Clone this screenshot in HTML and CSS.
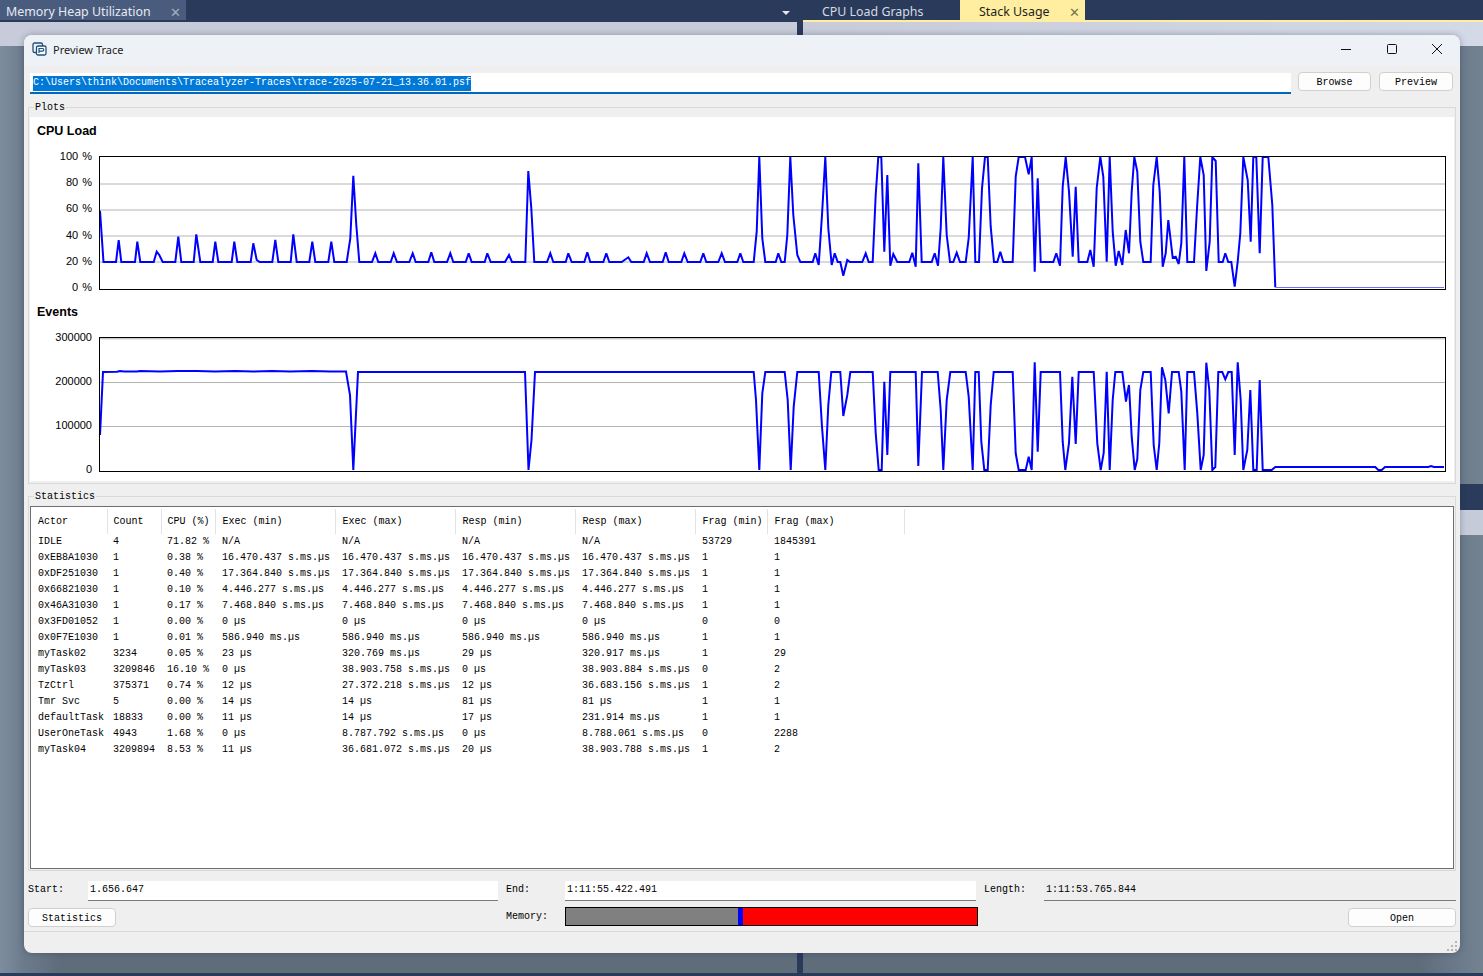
FILE: index.html
```html
<!doctype html>
<html lang="en">

<head>
    <meta charset="UTF-8">
    <title>Preview Trace</title>
    <link rel="stylesheet" href="styles.css">
</head>

<body>
    <div class="tabbar">
        <div class="tab tab--left">Memory Heap Utilization<span class="tab--x">✕</span></div>
        <div class="tabbar--arrow"></div>
        <div class="tab tab--plain">CPU Load Graphs</div>
        <div class="tab tab--active">Stack Usage<span class="tab--x">✕</span></div>
    </div>
    <div class="tabline"><div class="tabline--yellow"></div></div>

    <div class="side-band side-band--dark"></div>
    <div class="side-band side-band--light"></div>
    <div class="foot-split"></div>
    <div class="foot-divider"></div>
    <div class="top-split"></div>

    <div class="window">
        <div class="titlebar">
            <svg class="titlebar--icon" width="15" height="15" viewBox="0 0 15 15">
                <path d="M4.5 10.5H2.5a1.5 1.5 0 0 1-1.5-1.5V2.500a1.500 1.500 0 0 1 1.500-1.500H9a1.500 1.500 0 0 1 1.500 1.500V4" fill="none" stroke="#1c4f7c" stroke-width="1.300"/>
                <rect x="4.500" y="4" width="9.500" height="9" rx="1.500" fill="#fff" stroke="#1c4f7c" stroke-width="1.300"/>
                <path d="M7 11V6.500h3.500a1.300 1.300 0 0 1 0 2.600H7" fill="none" stroke="#1c4f7c" stroke-width="1.200"/>
            </svg>
            <span class="titlebar--text">Preview Trace</span>
            <div class="titlebar--buttons">
                <svg width="12" height="12" viewBox="0 0 12 12"><path d="M1 6.500H11" stroke="#111" stroke-width="1"/></svg>
                <svg width="12" height="12" viewBox="0 0 12 12"><rect x="1.500" y="1.500" width="9" height="9" rx="1" fill="none" stroke="#111"/></svg>
                <svg width="12" height="12" viewBox="0 0 12 12"><path d="M1 1L11 11M11 1L1 11" stroke="#111" stroke-width="1"/></svg>
            </div>
        </div>

        <div class="content">
            <div class="pathrow">
                <div class="field field--path"><span class="selected">C:\Users\think\Documents\Tracealyzer-Traces\trace-2025-07-21_13.36.01.psf</span></div>
                <button class="btn btn--browse">Browse</button>
                <button class="btn btn--preview">Preview</button>
            </div>

            <div class="group group--plots">
                <span class="group--label">Plots</span>
                <div class="plots">
                    <div class="plot--title">CPU Load</div>
                    <div class="plot plot--cpu">
                        <div class="axis">
                            <span>100 %</span><span>80 %</span><span>60 %</span><span>40 %</span><span>20 %</span><span>0 %</span>
                        </div>
                        <svg class="chart" width="1347" height="134" viewBox="99 156 1347 134">
                            <path class="grid" d="M100 184H1445M100 210H1445M100 236H1445M100 262H1445"/>
                            <polyline class="line" points="100,210.700 103.500,262 116,262 118.700,240 121.300,262 135,262 137.300,241.700 140.300,262 153.700,262 156.700,251.700 159.300,255 162.700,262 175.300,262 178.300,236.700 181.300,262 193.700,262 196.300,234.300 200.300,262 212.700,262 215.300,241.700 218.300,262 231.700,262 234.300,241.700 237.300,262 250.700,262 253.300,243.300 256.700,260 259.700,262 272.300,262 275.300,240 278.300,262 290.700,262 293.300,234.300 296.700,262 309.300,262 312.300,241.700 315.300,262 328.300,262 331.300,241.700 334.300,262 346.700,262 350.300,238.300 353.300,175.700 356.300,225 359.300,262 372,262 375.300,253.300 378.300,262 390.700,262 393.700,253.300 397,262 409.300,262 412.700,253.300 415.700,262 428.300,262 431.300,252.300 434.300,262 447,262 450.300,253.300 453.300,262 465.700,262 468.700,253.300 471.700,262 484.700,262 487.300,253.300 490.700,262 505,262 509,255 512,262 525.300,262 528.300,171 531.300,208.300 534.300,262 547,262 550.300,253.300 553.300,262 565.700,262 568.300,253.300 571.700,262 584.300,262 587.300,252.300 590.300,262 603.300,262 606.300,253.300 609.300,262 621.700,262 628.300,257.300 631.300,262 643.700,262 646.700,253.300 650,262 662.700,262 665.700,252.300 668.700,262 681.300,262 684.300,253.300 687.700,262 700.300,262 703.300,253.300 706.300,262 718.300,262 721.700,253.300 725,262 737.300,262 740.300,253.300 743.300,262 753.700,262 756.700,231.700 759.300,157 762.300,238.300 765.300,262 775.700,262 778.300,253.300 781.300,262 784.700,262 787.300,235 790.300,157 793.300,215 797.300,255 800.300,262 812.700,262 815.300,253.300 818.700,265 822,215 825.300,157 828.300,228.300 831.700,265 834.700,253.300 837.700,262 840.300,262 843.300,275.700 847.300,260 850,262 862.300,262 865.700,253.300 868.700,262 872.700,262 875.700,195 878.300,157 881.300,157 884.300,251.700 887.300,175 890.300,265.700 893.300,254 897.300,262 909.300,262 912.300,252.700 915.700,266.700 918.300,163.300 921.700,262 931.700,262 934.700,253.300 938,265.700 940.700,228.300 943.300,157 946.700,235 950,262 953.300,262 956.700,252.700 960,262 965.700,262 968.700,238 972.700,157 975.300,262 979,262 982,188.300 985,157 987.700,157 990.700,226.700 994,262 997.300,262 1000.300,251.700 1003.300,262 1012.700,262 1015.700,176.700 1018.700,157 1025,157 1028.700,174.300 1031.700,157 1034.700,271.700 1037.700,178.300 1040.700,262 1053.300,262 1056.300,253.300 1060,265.700 1062.700,186.700 1065.700,157 1069,191.700 1072.700,256.700 1075.700,186.700 1078.700,262 1087.300,262 1090.300,250 1093.700,266.700 1096.700,188 1100.300,157 1103.300,176.700 1106.700,261.700 1109.700,157 1112.700,231.700 1115.700,265.700 1118.700,251 1122.300,265 1125.700,230 1129,253.300 1131.700,191.700 1134.300,157 1137.300,171.700 1140.300,241.700 1143.300,262 1150.700,262 1153.300,185 1156.700,157 1159.700,191.700 1162.700,266.700 1165.700,253.300 1168.300,220 1172.700,257.700 1175.700,256.700 1178.700,264 1181.300,243.300 1184.300,157 1187.300,262 1194,262 1197,208.300 1200.300,157 1203.700,175 1206.300,271 1209.700,241.700 1212.300,157 1215.700,161 1218.700,262 1222.700,262 1225.300,253.300 1228.300,262 1231.300,262 1234.700,286.700 1237.700,261.700 1240.300,233.300 1243.300,157 1247.700,180 1250.700,241.700 1253.300,157 1256.300,157 1259.700,253.300 1262.700,157 1268.300,157 1272.300,205 1275.300,287.300"/>
                            <path class="line line--idle" d="M1275.300 287.500H1444"/>
                        </svg>
                    </div>
                    <div class="plot--title plot--title-events">Events</div>
                    <div class="plot plot--events">
                        <div class="axis">
                            <span>300000</span><span>200000</span><span>100000</span><span>0</span>
                        </div>
                        <svg class="chart" width="1347" height="135" viewBox="99 337 1347 135">
                            <path class="grid" d="M100 338.800H1445M100 382.500H1445M100 426.500H1445"/>
                            <polyline class="line" points="100,435 103,372 117,371.700 120,371 124,371.500 137,371.500 140,371 160,371.500 178,371 197,371 215,371.500 235,371 253,371.500 272,371 290,371.500 312,371 330,371.500 346,371.500 350,395 353.300,470 358,372 525,372 528.500,470 531.500,440 535,372 753.700,372 756,400 759.300,470 762.300,393.300 765.300,372 784.700,372 787.700,400 790.700,470 793.700,406.700 797.300,372 818.700,372 822,426.700 825.300,470 828.300,405 831.300,372 840.300,372 843.300,416 847.300,395 850.300,372 872.700,372 875.700,433.300 878.700,470 881.700,470 884.300,381.700 887.300,455 890.300,372 915.700,372 918.300,466 922,372 937.700,372 940.700,410 943.300,470 946.700,400 950.300,372 965.700,372 968.700,396.700 972.700,470 975.300,372 978.700,372 981.300,441.700 984.300,470 987.700,470 990.700,405 993.700,372 1012.700,372 1015.700,453.300 1018.700,470 1025.700,470 1028.700,456.700 1031.700,470 1034.700,362.300 1037.700,451.700 1040.700,372 1060,372 1062.700,441.700 1065.300,470 1069,443 1072.300,376.700 1075.700,444 1078.700,372 1093.700,372 1097.300,443.300 1100.700,470 1103.700,453 1106.700,371.700 1109.700,470 1112.700,400 1115.300,372 1122.300,372 1126,401.700 1127.300,393 1129,385 1131.700,436.700 1134.700,470 1137.300,459 1140.300,390 1143.300,372 1150.700,372 1153.700,445 1156.700,470 1159.300,443 1162,367.300 1165.300,380 1168.700,413.300 1172,372 1178.700,372 1181.300,391.700 1184.700,470 1187.300,372 1194,372 1197.300,413.300 1200.700,470 1203.700,455 1206.300,362.700 1209.300,390 1212.300,470 1215.300,467 1218.300,372 1222.300,372 1225.300,379.300 1228.300,372 1231.700,372 1234.700,455 1237.700,362.300 1240.700,400 1243.300,470 1247.300,450 1250.300,390 1253.300,470 1256.700,470 1259.700,380 1262.700,470 1271.700,470 1275.300,467 1375.300,467 1378.300,470 1381.700,470 1385,467 1428.300,467 1431,466 1434,467 1444,467"/>
                        </svg>
                    </div>
                </div>
            </div>

            <div class="group group--stats">
                <span class="group--label">Statistics</span>
                <div class="stats">
                    <table class="stats--table">
                        <colgroup>
                            <col class="col--actor"><col class="col--small"><col class="col--small"><col class="col--wide"><col class="col--wide"><col class="col--wide"><col class="col--wide"><col class="col--frag"><col class="col--last">
                        </colgroup>
                        <thead>
                            <tr><th>Actor</th><th>Count</th><th>CPU (%)</th><th>Exec (min)</th><th>Exec (max)</th><th>Resp (min)</th><th>Resp (max)</th><th>Frag (min)</th><th>Frag (max)</th></tr>
                        </thead>
                        <tbody>
                            <tr><td>IDLE</td><td>4</td><td>71.82 %</td><td>N/A</td><td>N/A</td><td>N/A</td><td>N/A</td><td>53729</td><td>1845391</td></tr>
                            <tr><td>0xEB8A1030</td><td>1</td><td>0.38 %</td><td>16.470.437 s.ms.µs</td><td>16.470.437 s.ms.µs</td><td>16.470.437 s.ms.µs</td><td>16.470.437 s.ms.µs</td><td>1</td><td>1</td></tr>
                            <tr><td>0xDF251030</td><td>1</td><td>0.40 %</td><td>17.364.840 s.ms.µs</td><td>17.364.840 s.ms.µs</td><td>17.364.840 s.ms.µs</td><td>17.364.840 s.ms.µs</td><td>1</td><td>1</td></tr>
                            <tr><td>0x66821030</td><td>1</td><td>0.10 %</td><td>4.446.277 s.ms.µs</td><td>4.446.277 s.ms.µs</td><td>4.446.277 s.ms.µs</td><td>4.446.277 s.ms.µs</td><td>1</td><td>1</td></tr>
                            <tr><td>0x46A31030</td><td>1</td><td>0.17 %</td><td>7.468.840 s.ms.µs</td><td>7.468.840 s.ms.µs</td><td>7.468.840 s.ms.µs</td><td>7.468.840 s.ms.µs</td><td>1</td><td>1</td></tr>
                            <tr><td>0x3FD01052</td><td>1</td><td>0.00 %</td><td>0 µs</td><td>0 µs</td><td>0 µs</td><td>0 µs</td><td>0</td><td>0</td></tr>
                            <tr><td>0x0F7E1030</td><td>1</td><td>0.01 %</td><td>586.940 ms.µs</td><td>586.940 ms.µs</td><td>586.940 ms.µs</td><td>586.940 ms.µs</td><td>1</td><td>1</td></tr>
                            <tr><td>myTask02</td><td>3234</td><td>0.05 %</td><td>23 µs</td><td>320.769 ms.µs</td><td>29 µs</td><td>320.917 ms.µs</td><td>1</td><td>29</td></tr>
                            <tr><td>myTask03</td><td>3209846</td><td>16.10 %</td><td>0 µs</td><td>38.903.758 s.ms.µs</td><td>0 µs</td><td>38.903.884 s.ms.µs</td><td>0</td><td>2</td></tr>
                            <tr><td>TzCtrl</td><td>375371</td><td>0.74 %</td><td>12 µs</td><td>27.372.218 s.ms.µs</td><td>12 µs</td><td>36.683.156 s.ms.µs</td><td>1</td><td>2</td></tr>
                            <tr><td>Tmr Svc</td><td>5</td><td>0.00 %</td><td>14 µs</td><td>14 µs</td><td>81 µs</td><td>81 µs</td><td>1</td><td>1</td></tr>
                            <tr><td>defaultTask</td><td>18833</td><td>0.00 %</td><td>11 µs</td><td>14 µs</td><td>17 µs</td><td>231.914 ms.µs</td><td>1</td><td>1</td></tr>
                            <tr><td>UserOneTask</td><td>4943</td><td>1.68 %</td><td>0 µs</td><td>8.787.792 s.ms.µs</td><td>0 µs</td><td>8.788.061 s.ms.µs</td><td>0</td><td>2288</td></tr>
                            <tr><td>myTask04</td><td>3209894</td><td>8.53 %</td><td>11 µs</td><td>36.681.072 s.ms.µs</td><td>20 µs</td><td>38.903.788 s.ms.µs</td><td>1</td><td>2</td></tr>
                        </tbody>
                    </table>
                </div>
            </div>

            <div class="timerow">
                <span class="timerow--label label--start">Start:</span>
                <div class="field field--start">1.656.647</div>
                <span class="timerow--label label--end">End:</span>
                <div class="field field--end">1:11:55.422.491</div>
                <span class="timerow--label label--length">Length:</span>
                <div class="field field--length">1:11:53.765.844</div>
            </div>

            <div class="actionrow">
                <button class="btn btn--stats">Statistics</button>
                <span class="timerow--label label--memory">Memory:</span>
                <div class="memory">
                    <div class="memory--used"></div>
                    <div class="memory--mark"></div>
                    <div class="memory--free"></div>
                </div>
                <button class="btn btn--open">Open</button>
            </div>
        </div>

        <div class="statusbar">
            <svg class="grip" width="11" height="11" viewBox="0 0 11 11">
                <path d="M8 0h2v2H8zM8 4h2v2H8zM4 4h2v2H4zM8 8h2v2H8zM4 8h2v2H4zM0 8h2v2H0z" fill="#b5b5b5"/>
            </svg>
        </div>
    </div>
</body>

</html>
```

FILE: styles.css
```css
* {
    box-sizing: border-box;
}

html, body {
    height: 976px;
    overflow: hidden;
}

body {
    margin: 0;
    font-family: "Liberation Mono", monospace;
    font-size: 10px;
    color: #000000;
    background: linear-gradient(to right, #7d8d9f 0, #6c7b8c 24px, #5f6c7a 60px, #5f6c7a 1420px, #6c7b8c 1460px, #74838f 1483px);
    position: relative;
}

/* tab strip */
.tabbar {
    display: flex;
    height: 20px;
    background-color: #2a3a5a;
    font-family: "Noto Sans", sans-serif;
    font-size: 12.400px;
    line-height: 20px;
}

.tab {
    display: flex;
    justify-content: space-between;
    padding: 2px 5px 0 6px;
}

.tab--x {
    font-size: 13px;
    color: #a5adbd;
}

.tab--left {
    width: 186px;
    color: #e6eaf2;
    background-color: #4a5c7e;
}

.tabbar--arrow {
    width: 0;
    height: 0;
    margin: 11px 0 0 596px;
    border-left: 4px solid transparent;
    border-right: 4px solid transparent;
    border-top: 4px solid #e6e6e6;
}

.tab--plain {
    width: 146px;
    margin-left: 24px;
    color: #d5dae4;
    padding-left: 8px;
}

.tab--active {
    width: 125px;
    padding-left: 19px;
    padding-right: 5px;
    color: #1e1e1e;
    background-color: #ffeea0;
}

.tab--active .tab--x {
    color: #7a7350;
}

.tabline {
    height: 2px;
    background-color: #2a3a5a;
    display: flex;
    justify-content: flex-end;
}

.tabline--yellow {
    width: 680px;
    background-color: #ffeea0;
}

/* bits of the main window that show around the dialog */
.top-split {
    position: absolute;
    left: 0;
    right: 0;
    top: 22px;
    height: 24px;
    background: linear-gradient(to right, #c8ccda 0, #c8ccda 797px, #2a3a5a 797px, #2a3a5a 803px, #c8ccda 803px, #d4d9e7 1483px);
}

.foot-split {
    position: absolute;
    left: 0;
    right: 0;
    top: 973px;
    height: 3px;
    background-color: #2a3a5a;
}

.foot-divider {
    position: absolute;
    left: 797px;
    top: 953px;
    width: 6px;
    height: 20px;
    background-color: #2a3a5a;
}

.side-band {
    position: absolute;
    left: 1460px;
    right: 0;
    height: 26px;
}

.side-band--dark {
    top: 484px;
    background-color: #2a3b5b;
}

.side-band--light {
    top: 510px;
    height: 25px;
    background-color: #c6cbda;
}

/* dialog */
.window {
    position: absolute;
    left: 24px;
    top: 35px;
    width: 1436px;
    height: 918px;
    border-radius: 8px;
    background-color: #efefef;
    overflow: hidden;
    display: flex;
    flex-direction: column;
    box-shadow: 0 0 6px rgba(30, 40, 60, 0.35);
}

.titlebar {
    height: 31px;
    flex: none;
    display: flex;
    align-items: center;
    padding: 0 0 2px 8px;
    background-color: #eef2f7;
    font-family: "Noto Sans", sans-serif;
    font-size: 11px;
    color: #222222;
}

.titlebar--text {
    margin-left: 6px;
}

.titlebar--buttons {
    margin-left: auto;
    margin-bottom: 2px;
    display: flex;
    gap: 33.500px;
    padding-right: 17px;
}

.content {
    flex: 1;
    padding: 0 4px 0 4px;
    display: flex;
    flex-direction: column;
}

.pathrow {
    display: flex;
    align-items: flex-start;
    height: 35px;
    padding: 6px 0 0 2px;
}

.field {
    background-color: #ffffff;
    height: 20px;
    line-height: 16px;
    padding: 1px 0 0 2px;
    border-bottom: 1px solid #7a7a7a;
}

.field--path {
    width: 1261px;
    height: 21px;
    margin-top: 1px;
    padding: 2px 0 0 3px;
    border-bottom: 2px solid #0067c0;
}

.selected {
    display: inline-block;
    height: 15px;
    line-height: 14px;
    background-color: #0078d7;
    color: #ffffff;
}

.btn {
    font-family: "Liberation Mono", monospace;
    font-size: 10px;
    height: 19px;
    padding: 1px 0 0;
    background-color: #fdfdfd;
    border: 1px solid #d0d0d0;
    border-radius: 4px;
    color: #000000;
}

.btn--browse {
    width: 73px;
    margin-left: 7px;
}

.btn--preview {
    width: 74px;
    margin-left: 8px;
}

/* group boxes */
.group {
    position: relative;
    margin-left: 0;
    width: 1428px;
    border: 1px solid #d9d9d9;
}

.group--label {
    position: absolute;
    left: 5px;
    top: -6px;
    padding: 0 1px;
    line-height: 12px;
    background-color: #efefef;
}

.group--plots {
    height: 377px;
    padding: 9px 1px 0 1px;
    margin-top: 6px;
}

.plots {
    height: 364px;
    background-color: #ffffff;
}

.plot--title {
    font-family: "Liberation Sans", sans-serif;
    font-size: 12.500px;
    font-weight: bold;
    height: 20px;
    padding: 7px 0 0 7px;
    line-height: 15px;
}

.plot {
    display: flex;
    margin-top: 19px;
}

.plot--cpu {
    height: 134px;
}

.plot--title-events {
    margin-top: 8px;
}

.plot--events {
    height: 135px;
}

.axis {
    width: 69px;
    flex: none;
    display: flex;
    flex-direction: column;
    justify-content: space-between;
    align-items: flex-end;
    font-family: "Liberation Sans", sans-serif;
    font-size: 11px;
    line-height: 12px;
    word-spacing: 1px;
    padding: 0 7px 0 0;
    margin-top: -6px;
    height: 143px;
}

.plot--events .axis {
    height: 144px;
}

.chart {
    border: 0;
    overflow: hidden;
    flex: none;
    outline: 1px solid #000000;
    outline-offset: -1px;
}

.grid {
    fill: none;
    stroke: #b4b4b4;
    stroke-width: 1;
}

.line {
    fill: none;
    stroke: #0000ff;
    stroke-width: 2;
    stroke-linejoin: miter;
    stroke-miterlimit: 3;
}

.line--idle {
    stroke: #7070ff;
    stroke-width: 1;
}

.group--stats {
    height: 375px;
    padding: 9px 1px 0 1px;
    margin-top: 12px;
}

.stats {
    height: 363px;
    background-color: #ffffff;
    border: 1px solid #6e6e6e;
    padding-top: 2px;
}

.stats--table {
    border-collapse: collapse;
    table-layout: fixed;
    width: 873px;
}

.col--actor {
    width: 76px;
}

.col--small {
    width: 54px;
}

.col--wide {
    width: 120px;
}

.col--frag {
    width: 72px;
}

.col--last {
    width: 137px;
}

.stats--table th {
    height: 25px;
    padding: 0 0 0 7px;
    font-weight: normal;
    text-align: left;
    border-right: 1px solid #e3e3e3;
}

.stats--table td {
    height: 16px;
    padding: 0 0 0 7px;
    line-height: 16px;
    white-space: nowrap;
}

.stats--table th:nth-child(2),
.stats--table th:nth-child(3),
.stats--table td:nth-child(2),
.stats--table td:nth-child(3) {
    padding-left: 6px;
}

/* bottom rows */
.timerow {
    display: flex;
    align-items: flex-start;
    height: 27px;
    margin-top: 10px;
}

.timerow--label {
    flex: none;
    line-height: 16px;
    padding-top: 1px;
}

.label--start {
    width: 60px;
}

.field--start {
    width: 410px;
}

.label--end {
    margin-left: 8px;
    width: 59px;
}

.field--end {
    width: 411px;
}

.label--length {
    margin-left: 8px;
    width: 60px;
}

.field--length {
    width: 412px;
    background-color: #eeeeee;
}

.actionrow {
    display: flex;
    align-items: flex-start;
    height: 23px;
}

.btn--stats {
    width: 88px;
    margin-right: 390px;
}

.label--memory {
    width: 59px;
}

.memory {
    display: flex;
    width: 413px;
    height: 19px;
    border: 1px solid #000000;
    margin-top: -1px;
}

.memory--used {
    width: 172px;
    background-color: #808080;
}

.memory--mark {
    width: 5px;
    background-color: #0000ff;
}

.memory--free {
    flex: 1;
    background-color: #ff0000;
}

.btn--open {
    width: 108px;
    margin-left: 370px;
}

.statusbar {
    height: 22px;
    flex: none;
    border-top: 1px solid #d9d9d9;
    display: flex;
    justify-content: flex-end;
    align-items: flex-end;
    padding: 0 2px 1px 0;
}
```
